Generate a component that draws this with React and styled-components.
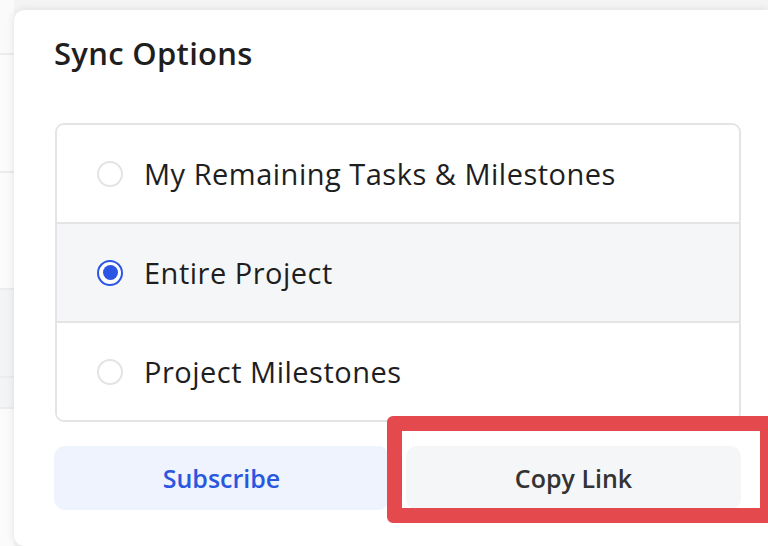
import React, { useState } from "react";
import styled, { createGlobalStyle } from "styled-components";

const GlobalStyle = createGlobalStyle`
  html, body {
    margin: 0;
    padding: 0;
    background: #f4f4f5;
    font-family: "Open Sans", "Liberation Sans", sans-serif;
  }
`;

const Page = styled.div`
  display: flex;
  width: 768px;
  height: 546px;
  overflow: hidden;
  position: relative;
`;

const BackStrip = styled.div`
  width: 14px;
  flex-shrink: 0;
  display: flex;
  flex-direction: column;
  padding-top: 53px;
  background: #fafafa;
`;

const BackRow = styled.div`
  height: ${p => p.h}px;
  border-top: 2px solid #ececec;
  background: ${p => (p.shaded ? "#f3f4f6" : "#fbfbfb")};
`;

const Panel = styled.div`
  flex: 1;
  margin-top: 10px;
  background: #fff;
  border-radius: 10px 0 0 10px;
  box-shadow: 0 0 8px rgba(0, 0, 0, 0.1);
  padding: 24px 27px 0 40px;
  display: flex;
  flex-direction: column;
`;

const Title = styled.h2`
  margin: 0;
  font-size: 31px;
  font-weight: 600;
  color: #1f1f1f;
  line-height: 38px;
  letter-spacing: 0.3px;
`;

const OptionList = styled.div`
  margin-top: 51px;
  border: 2px solid #e4e4e6;
  border-radius: 9px;
  overflow: hidden;
  margin-left: 1px;
`;

const Option = styled.label`
  height: 97px;
  display: flex;
  align-items: center;
  gap: 21px;
  padding-left: 40px;
  cursor: pointer;
  background: ${p => (p.selected ? "#f5f6f8" : "#fff")};

  & + & {
    border-top: 2px solid #e4e4e6;
  }
`;

const Radio = styled.span`
  width: 26px;
  height: 26px;
  flex-shrink: 0;
  box-sizing: border-box;
  border-radius: 50%;
  border: 2px solid ${p => (p.selected ? "#2c55e3" : "#e3e3e3")};
  background: #fff;
  display: flex;
  align-items: center;
  justify-content: center;

  &::after {
    content: "";
    width: 15px;
    height: 15px;
    border-radius: 50%;
    background: ${p => (p.selected ? "#2c55e3" : "transparent")};
  }
`;

const OptionText = styled.span`
  font-size: 29px;
  letter-spacing: 0.5px;
  color: #1e1e1e;
  font-weight: 400;
`;

const Actions = styled.div`
  margin-top: 24px;
  display: grid;
  grid-template-columns: 1fr 1fr;
  gap: 17px;
`;

const Button = styled.button`
  height: 64px;
  border: none;
  border-radius: 11px;
  font-family: inherit;
  font-size: 25px;
  font-weight: 600;
  cursor: pointer;
  background: ${p => (p.primary ? "#eef3fd" : "#f5f6f8")};
  color: ${p => (p.primary ? "#2a56e0" : "#333")};
`;

const Highlight = styled.div`
  position: absolute;
  left: 387px;
  top: 416px;
  width: 388px;
  height: 107px;
  box-sizing: border-box;
  border: 15px solid #e3494d;
  border-radius: 6px;
  pointer-events: none;
`;

const options = [
  "My Remaining Tasks & Milestones",
  "Entire Project",
  "Project Milestones"
];

const App = () => {
  const [selected, setSelected] = useState(1);
  return (
    <Page>
      <GlobalStyle />
      <BackStrip>
        <BackRow h={119} />
        <BackRow h={118} />
        <BackRow h={88} shaded />
        <BackRow h={30} shaded />
        <BackRow h={140} />
      </BackStrip>
      <Panel>
        <Title>Sync Options</Title>
        <OptionList>
          {options.map((label, i) => (
            <Option key={label} selected={i === selected} onClick={() => setSelected(i)}>
              <Radio selected={i === selected} />
              <OptionText>{label}</OptionText>
            </Option>
          ))}
        </OptionList>
        <Actions>
          <Button primary>Subscribe</Button>
          <Button>Copy Link</Button>
        </Actions>
      </Panel>
      <Highlight />
    </Page>
  );
};

export default App;
